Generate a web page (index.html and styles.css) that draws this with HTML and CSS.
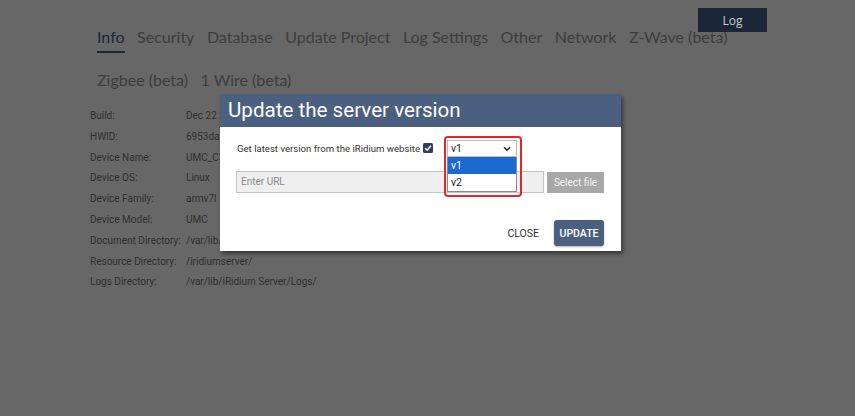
FILE: index.html
```html
<!DOCTYPE html>
<html>
<head>
<meta charset="utf-8">
<link rel="stylesheet" href="styles.css">
</head>
<body>
<div class="page">
  <div class="topbar"><button class="log-btn">Log</button></div>
  <nav class="tabs">
    <span class="tab active">Info</span>
    <span class="tab">Security</span>
    <span class="tab">Database</span>
    <span class="tab">Update Project</span>
    <span class="tab">Log Settings</span>
    <span class="tab">Other</span>
    <span class="tab">Network</span>
    <span class="tab">Z-Wave (beta)</span>
    <span class="tab">Zigbee (beta)</span>
    <span class="tab">1 Wire (beta)</span>
  </nav>
  <div class="info">
    <div class="row"><span class="label">Build:</span><span class="value">Dec 22 2023 11:42:17</span></div>
    <div class="row"><span class="label">HWID:</span><span class="value">6953da9f0c2e41b7</span></div>
    <div class="row"><span class="label">Device Name:</span><span class="value">UMC_C3</span></div>
    <div class="row"><span class="label">Device OS:</span><span class="value">Linux</span></div>
    <div class="row"><span class="label">Device Family:</span><span class="value">armv7l</span></div>
    <div class="row"><span class="label">Device Model:</span><span class="value">UMC</span></div>
    <div class="row"><span class="label">Document Directory:</span><span class="value">/var/lib/iRidium Server/Documents/</span></div>
    <div class="row"><span class="label">Resource Directory:</span><span class="value">/iridiumserver/</span></div>
    <div class="row"><span class="label">Logs Directory:</span><span class="value">/var/lib/iRidium Server/Logs/</span></div>
  </div>
</div>

<div class="dialog">
  <div class="dialog-head">Update the server version</div>
  <div class="dialog-body">
    <div class="line1">
      <span class="cb-label">Get latest version from the iRidium website</span>
      <svg class="cb" width="10" height="10" viewBox="0 0 10 10"><rect x="0" y="0" width="10" height="10" rx="1.5" fill="#2c3f60"/><path d="M2.2 5.2 L4.2 7.2 L7.9 2.8" fill="none" stroke="#fff" stroke-width="1.5"/></svg>
      <div class="select-wrap">
        <div class="select"><span>v1</span><svg width="8" height="6" viewBox="0 0 8 6"><path d="M1 1.2 L4 4.2 L7 1.2" fill="none" stroke="#222" stroke-width="1.6"/></svg></div>
        <div class="options">
          <div class="opt sel">v1</div>
          <div class="opt">v2</div>
        </div>
        <div class="highlight"></div>
      </div>
    </div>
    <div class="line2">
      <div class="url">Enter URL</div>
      <button class="file-btn">Select file</button>
    </div>
    <div class="actions">
      <button class="close-btn">CLOSE</button>
      <button class="update-btn">UPDATE</button>
    </div>
  </div>
</div>
</body>
</html>
```
FILE: styles.css
```css
html, body {
  margin: 0;
  padding: 0;
}
body {
  width: 855px;
  height: 416px;
  background: #676767;
  overflow: hidden;
  position: relative;
  font-family: Roboto, "Liberation Sans", sans-serif;
}
.topbar {
  display: flex;
  justify-content: flex-end;
  padding: 8px 88px 0 0;
  height: 18px;
}
.log-btn {
  width: 69px;
  height: 24px;
  background: #1b2638;
  border: none;
  color: #c9ccd1;
  font-family: "Open Sans", sans-serif;
  font-size: 12px;
  padding: 0;
  position: relative;
  z-index: 1;
}
.tabs {
  display: flex;
  flex-wrap: wrap;
  column-gap: 12.5px;
  row-gap: 21px;
  width: 650px;
  padding-left: 97px;
}
.tab {
  font-family: Lato, "Open Sans", sans-serif;
  font-size: 16px;
  color: #3d3d3d;
  height: 22px;
  line-height: 22px;
  position: relative;
}
.tab.active {
  color: #1d2636;
}
.tab.active::after {
  content: "";
  position: absolute;
  left: 0;
  right: 0;
  bottom: -5px;
  height: 2px;
  background: #1d2636;
}
.info {
  padding: 15px 0 0 90px;
  font-size: 10px;
  color: #2f2f2f;
}
.row {
  display: flex;
  height: 20.8px;
  line-height: 20.8px;
  white-space: nowrap;
}
.label {
  width: 96px;
  flex: none;
}
.dialog {
  position: absolute;
  left: 220px;
  top: 94px;
  width: 401px;
  height: 157px;
  background: #fff;
  box-shadow: 2px 3px 4px rgba(0, 0, 0, 0.45);
}
.dialog-head {
  height: 33px;
  background: #4b5f80;
  color: #fff;
  font-size: 20.6px;
  line-height: 32px;
  padding-left: 8px;
}
.dialog-body {
  padding: 13px 17px 0 16px;
}
.line1 {
  display: flex;
  align-items: center;
  height: 17px;
}
.cb-label {
  font-size: 9.6px;
  color: #333;
  padding-left: 1px;
}
.cb {
  margin: 0 0 2px 3px;
}
.select-wrap {
  position: relative;
  margin-left: 14px;
}
.select {
  width: 70px;
  height: 17px;
  box-sizing: border-box;
  border: 1px solid #bdbdbd;
  display: flex;
  align-items: center;
  justify-content: space-between;
  padding: 0 5px 0 3px;
  font-size: 10.5px;
  color: #222;
}
.options {
  position: absolute;
  left: 0;
  top: 17px;
  width: 70px;
  border: 1px solid #8a8a8a;
  border-top: none;
  box-sizing: border-box;
  background: #fff;
  z-index: 2;
}
.opt {
  height: 17px;
  line-height: 17px;
  font-size: 10.5px;
  padding-left: 3px;
  color: #222;
}
.opt.sel {
  background: #1b6ad2;
  color: #fff;
}
.highlight {
  position: absolute;
  left: -3px;
  top: -4px;
  width: 78px;
  height: 61px;
  box-sizing: border-box;
  border: 2px solid #e3262a;
  border-radius: 4px;
  z-index: 3;
}
.line2 {
  display: flex;
  align-items: center;
  margin-top: 14px;
  gap: 3px;
}
.url {
  width: 308px;
  height: 22px;
  box-sizing: border-box;
  border: 1px solid #c4c4c4;
  background: #efefef;
  font-size: 10px;
  color: #8a8a8a;
  line-height: 20px;
  padding-left: 4px;
}
.file-btn {
  width: 57px;
  height: 21px;
  background: #a8a8a8;
  border: none;
  color: #f4f4f4;
  font-family: Roboto, sans-serif;
  font-size: 10px;
  padding: 0;
}
.actions {
  display: flex;
  justify-content: flex-end;
  align-items: center;
  margin-top: 27px;
  gap: 15px;
}
.close-btn {
  background: none;
  border: none;
  padding: 0;
  font-family: Roboto, sans-serif;
  font-size: 10.5px;
  color: #333;
}
.update-btn {
  width: 50px;
  height: 26px;
  background: #4b5f80;
  border: none;
  border-radius: 3px;
  color: #fff;
  font-family: Roboto, sans-serif;
  font-weight: 500;
  font-size: 10.5px;
  padding: 0;
  box-shadow: 0 1px 2px rgba(0,0,0,0.3);
}
```
